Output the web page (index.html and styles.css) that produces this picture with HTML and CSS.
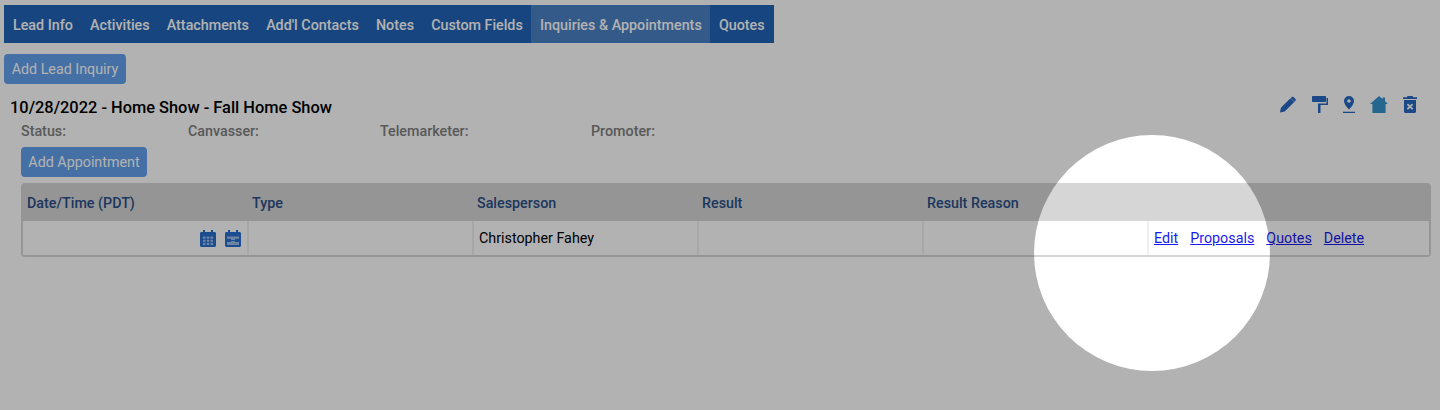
FILE: index.html
```html
<!DOCTYPE html>
<html lang="en">
<head>
<meta charset="utf-8">
<title>Inquiries &amp; Appointments</title>
<link rel="stylesheet" href="styles.css">
</head>
<body>
<nav class="tabs">
  <a class="tab">Lead Info</a>
  <a class="tab">Activities</a>
  <a class="tab">Attachments</a>
  <a class="tab">Add'l Contacts</a>
  <a class="tab">Notes</a>
  <a class="tab">Custom Fields</a>
  <a class="tab active">Inquiries &amp; Appointments</a>
  <a class="tab">Quotes</a>
</nav>
<button class="btn btn-lead">Add Lead Inquiry</button>
<section class="inquiry">
  <div class="title-row">
    <h2 class="title">10/28/2022 - Home Show - Fall Home Show</h2>
    <div class="actions">
      <svg class="ico ico-pencil" viewBox="0 0 18 18"><path d="M0.5 17.5l1-5L11.6 2.4l4 4L5.5 16.500zM12.800 1.200c.7-.7 1.600-.7 2.200 0l1.800 1.800c.6.6.6 1.500 0 2.200l-.9.9-4-4z"/></svg>
      <svg class="ico ico-roller" viewBox="0 0 16 17"><path d="M0 .8C0 .3.3 0 .8 0h12.400c.5 0 .8.300.8.800V5.200c0 .5-.3.800-.8.800H.8C.3 6 0 5.700 0 5.200zM14.500 2H16v7H8.500v8H6V7.500h8.500z"/></svg>
      <svg class="ico ico-marker" viewBox="0 0 12 17"><path fill-rule="evenodd" d="M6 0a5 5 0 0 1 5 5c0 3-3 6.500-5 8.500C4 11.500 1 8 1 5a5 5 0 0 1 5-5zm0 3.200a1.800 1.800 0 1 0 0 3.600 1.800 1.800 0 0 0 0-3.600zM0 15.700h12V17H0z"/></svg>
      <svg class="ico ico-home" viewBox="0 0 18 17"><path d="M9 0l3.500 3V1.500H15v3.700l3 2.800h-2.400v9H2.400V8H0z"/></svg>
      <svg class="ico ico-trash" viewBox="0 0 14 17"><path fill-rule="evenodd" d="M4.500 0h5l.7 1.300H14V3H0V1.300h3.800zM1 4h12v11.500c0 .8-.7 1.500-1.500 1.500h-9C1.700 17 1 16.300 1 15.500zm4 3.500L3.800 8.700 5.800 10.600 3.800 12.600 5 13.800 7 11.800l2 2 1.200-1.200-2-2 2-1.900L9 7.500 7 9.400z"/></svg>
    </div>
  </div>
  <div class="meta">
    <span>Status:</span>
    <span>Canvasser:</span>
    <span>Telemarketer:</span>
    <span>Promoter:</span>
  </div>
  <button class="btn btn-appt">Add Appointment</button>
  <div class="grid-table">
    <div class="row head">
      <div class="cell">Date/Time (PDT)</div>
      <div class="cell">Type</div>
      <div class="cell">Salesperson</div>
      <div class="cell">Result</div>
      <div class="cell">Result Reason</div>
      <div class="cell"></div>
    </div>
    <div class="row body">
      <div class="cell cal-cell">
        <svg class="cal" viewBox="0 0 16 17">
          <path d="M3 0h2v2h6V0h2v2h1.500C15.300 2 16 2.700 16 3.500v12c0 .8-.7 1.500-1.500 1.500h-13C.7 17 0 16.300 0 15.500v-12C0 2.700.7 2 1.500 2H3z"/>
          <path class="cal-inner" d="M3 6.500h2.500v2.200H3zm3.700 0h2.600v2.200H6.700zm3.800 0H13v2.200h-2.500zM3 9.700h2.500v2H3zm3.700 0h2.600v2H6.700zm3.800 0H13v2h-2.500zM3 12.700h2.500V15H3zm3.700 0h2.600V15H6.700zm3.800 0H13V15h-2.500z"/>
        </svg>
        <svg class="cal" viewBox="0 0 16 17">
          <path d="M3 0h2v2h6V0h2v2h1.500C15.300 2 16 2.700 16 3.500v12c0 .8-.7 1.500-1.500 1.500h-13C.7 17 0 16.300 0 15.500v-12C0 2.700.7 2 1.500 2H3z"/>
          <path class="cal-inner" d="M2 6.500h12v2.200H10V10H6V8.700H2zM2 12h4v-1h4v1h4v3H2z"/>
        </svg>
      </div>
      <div class="cell"></div>
      <div class="cell person">Christopher Fahey</div>
      <div class="cell"></div>
      <div class="cell"></div>
      <div class="cell links">
        <a href="#">Edit</a>
        <a href="#">Proposals</a>
        <a href="#">Quotes</a>
        <a href="#">Delete</a>
      </div>
    </div>
  </div>
</section>
<div class="spotlight"></div>
</body>
</html>
```
FILE: styles.css
```css
* { box-sizing: border-box; }
html, body { height: 100%; }
body {
  margin: 0;
  padding: 5px 0 0 4px;
  background: #fff;
  font-family: Roboto, "Liberation Sans", sans-serif;
  font-size: 14.3px;
  overflow: hidden;
}
.tabs {
  display: inline-flex;
  height: 38px;
  padding: 0 0.4px;
  background: #2264b6;
  vertical-align: top;
}
.tab {
  display: flex;
  align-items: center;
  padding: 1px 8.6px 0;
  color: #fff;
  font-weight: 500;
  font-size: 14.3px;
}
.tab.active { background: #4981c5; }
.btn {
  display: block;
  border: 0;
  border-radius: 4px;
  background: #63a1ec;
  color: #fff;
  font: 400 14.3px Roboto, "Liberation Sans", sans-serif;
  padding: 0;
  height: 30px;
}
.btn-lead { margin-top: 11px; width: 122px; }
.inquiry { padding-right: 9px; }
.title-row {
  display: flex;
  justify-content: space-between;
  align-items: flex-start;
  margin-top: 12px;
  height: 27px;
  padding-left: 6px;
}
.title {
  margin: 0;
  font-size: 16.4px;
  font-weight: 500;
  line-height: 24px;
  color: #000;
}
.actions {
  display: flex;
  align-items: flex-start;
  gap: 15px;
  margin-right: 14px;
}
.ico { display: block; height: 17px; fill: #2868c0; }
.ico-pencil { width: 18px; }
.ico-roller { width: 16px; }
.ico-marker { width: 12px; }
.ico-home { width: 18px; fill: #3692cc; }
.ico-trash { width: 14px; }
.meta {
  display: grid;
  grid-template-columns: 167px 192px 211px auto;
  margin-left: 17px;
  height: 17px;
  line-height: 17px;
  font-weight: 500;
  color: #808080;
}
.btn-appt { margin: 7px 0 0 17px; width: 126px; }
.grid-table {
  margin: 6px 0 0 17px;
  width: 1410px;
  height: 74px;
  background: #d6d6d6;
  border-radius: 4px;
  padding: 0 2px 2px;
}
.row {
  display: grid;
  grid-template-columns: 226px repeat(4, 225px) 1fr;
}
.head {
  grid-template-columns: repeat(5, 225px) 1fr;
  height: 38px;
  align-items: center;
  color: #2a4f88;
  font-weight: 500;
  margin: 0 -2px;
  padding: 1px 2px 0;
}
.head .cell { padding-left: 4px; }
.body { height: 34px; background: #fff; }
.body .cell {
  display: flex;
  align-items: center;
  border-right: 2px solid #f0f0f0;
  color: #000;
}
.body .cell:last-child { border-right: 0; }
.person { padding-left: 5px; }
.cal-cell { justify-content: flex-end; gap: 9px; padding-right: 6px; }
.cal { display: block; width: 16px; height: 17px; fill: #2a6fd0; }
.cal .cal-inner { fill: #9dbde8; }
.links { gap: 12px; padding-left: 5px; }
.links a { color: #1a1aee; }
.spotlight {
  position: fixed;
  left: 1034px;
  top: 135px;
  width: 236px;
  height: 236px;
  border-radius: 50%;
  box-shadow: 0 0 0 2000px rgba(0, 0, 0, 0.3);
  pointer-events: none;
}
```
